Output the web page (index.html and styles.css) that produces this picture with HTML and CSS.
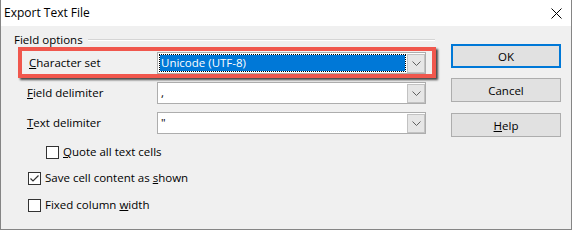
FILE: index.html
```html
<!DOCTYPE html>
<html>
<head>
<meta charset="utf-8">
<title>Export Text File</title>
<link rel="stylesheet" href="styles.css">
</head>
<body>
<div class="window">
  <div class="titlebar">
    <span class="title">Export Text File</span>
    <svg class="close" width="11" height="11" viewBox="0 0 11 11"><path d="M0.5 0.5 L10.5 10.5 M10.5 0.5 L0.5 10.5" stroke="#000" stroke-width="1" fill="none"/></svg>
  </div>
  <div class="content">
    <div class="main">
      <div class="frame-head"><span>Field options</span><span class="rule"></span></div>
      <div class="fields">
        <div class="row">
          <span class="label first"><u>C</u>haracter set</span>
          <div class="combo">
            <div class="value sel"><span class="sel-inner">Unicode (UTF-8)</span></div>
            <span class="drop"><svg width="9" height="5" viewBox="0 0 9 5"><path d="M0.5 0.5 L4.5 4.5 L8.5 0.5" stroke="#606060" fill="none"/></svg></span>
          </div>
        </div>
        <div class="row">
          <span class="label"><u>F</u>ield delimiter</span>
          <div class="combo">
            <div class="value">,</div>
            <span class="drop"><svg width="9" height="5" viewBox="0 0 9 5"><path d="M0.5 0.5 L4.5 4.5 L8.5 0.5" stroke="#606060" fill="none"/></svg></span>
          </div>
        </div>
        <div class="row">
          <span class="label"><u>T</u>ext delimiter</span>
          <div class="combo">
            <div class="value">"</div>
            <span class="drop"><svg width="9" height="5" viewBox="0 0 9 5"><path d="M0.5 0.5 L4.5 4.5 L8.5 0.5" stroke="#606060" fill="none"/></svg></span>
          </div>
        </div>
      </div>
      <div class="checks">
        <div class="check indent"><span class="box"></span><span><u>Q</u>uote all text cells</span></div>
        <div class="check"><span class="box"><svg width="11" height="11" viewBox="0 0 11 11"><path d="M1.5 5.5 L4 8 L9.5 2.5" stroke="#333" stroke-width="1.2" fill="none"/></svg></span><span>Save cell content as <u>s</u>hown</span></div>
        <div class="check last"><span class="box"></span><span>Fixed column <u>w</u>idth</span></div>
      </div>
    </div>
    <div class="buttons">
      <div class="btn default">OK</div>
      <div class="btn cancel">Cancel</div>
      <div class="btn help"><span><u>H</u>elp</span></div>
    </div>
  </div>
  <div class="annotation"></div>
</div>
</body>
</html>
```

FILE: styles.css
```css
* { box-sizing: border-box; }
html, body { margin: 0; padding: 0; }
body {
  width: 572px;
  height: 230px;
  overflow: hidden;
  background: #fff;
  font-family: "Open Sans", "Noto Sans", sans-serif;
  font-size: 11.5px;
  color: #000;
}
u { text-decoration: underline; text-underline-offset: 1px; }
.window {
  position: relative;
  width: 572px;
  height: 230px;
  border: 1px solid #858585;
  border-top: none;
  background: #f0f0f0;
  display: flex;
  flex-direction: column;
}
.titlebar {
  height: 26px;
  background: #fff;
  display: flex;
  align-items: center;
  justify-content: space-between;
  padding: 0 9px 0 3px;
  flex: none;
}
.title { font-size: 12px; line-height: 16px; }
.close { display: block; }
.content {
  flex: 1;
  display: flex;
  gap: 16px;
  padding: 6px 10px 0 13px;
}
.main { width: 421px; }
.frame-head {
  display: flex;
  align-items: center;
  gap: 5px;
  height: 16px;
  line-height: 16px;
}
.rule {
  flex: 1;
  height: 2px;
  border-top: 1px solid #d5d5d5;
  border-bottom: 1px solid #fff;
}
.fields {
  margin-top: 4px;
  padding-left: 13px;
  display: flex;
  flex-direction: column;
  gap: 8px;
}
.row {
  display: flex;
  align-items: center;
  height: 22px;
}
.label { width: 130px; line-height: 16px; }
.label.first { padding-left: 2px; }
.combo {
  width: 269px;
  height: 22px;
  border: 1px solid #adadad;
  background: #fff;
  display: flex;
  align-items: center;
}
.value {
  flex: 1;
  height: 20px;
  line-height: 20px;
  padding-left: 3px;
}
.value.sel {
  padding: 1px;
  background: #fff;
}
.sel-inner {
  display: block;
  height: 18px;
  line-height: 16px;
  padding-left: 1px;
  color: #fff;
  background: #0078d7;
  background-clip: padding-box;
  border: 1px dotted #000;
}
.drop {
  width: 18px;
  height: 19px;
  border: 1px solid #c2c2c2;
  background: #e6e6e6;
  display: flex;
  align-items: center;
  justify-content: center;
}
.drop svg { display: block; }
.checks {
  margin-top: 10px;
  padding-left: 14px;
  display: flex;
  flex-direction: column;
  gap: 10px;
}
.check {
  display: flex;
  align-items: center;
  height: 16px;
  line-height: 16px;
}
.check.indent { margin-left: 18px; }
.check.last { margin-top: 1px; }
.box {
  width: 13px;
  height: 13px;
  border: 1px solid #333;
  background: #fff;
  margin-right: 4px;
  flex: none;
  display: flex;
  align-items: center;
  justify-content: center;
}
.box svg { display: block; }
.buttons {
  width: 110px;
  padding-top: 12px;
  display: flex;
  flex-direction: column;
}
.btn {
  height: 24px;
  border: 1px solid #adadad;
  background: #e1e1e1;
  display: flex;
  align-items: center;
  justify-content: center;
  font-size: 11.5px;
}
.btn.default { border: 2px solid #0078d7; }
.btn.cancel { margin-top: 10px; }
.btn.help { margin-top: 11px; }
.annotation {
  position: absolute;
  left: 17px;
  top: 47px;
  width: 418px;
  height: 31px;
  border: 4px solid #f0574d;
  box-shadow: 2px 2px 2px rgba(0, 0, 0, 0.7);
}
```
